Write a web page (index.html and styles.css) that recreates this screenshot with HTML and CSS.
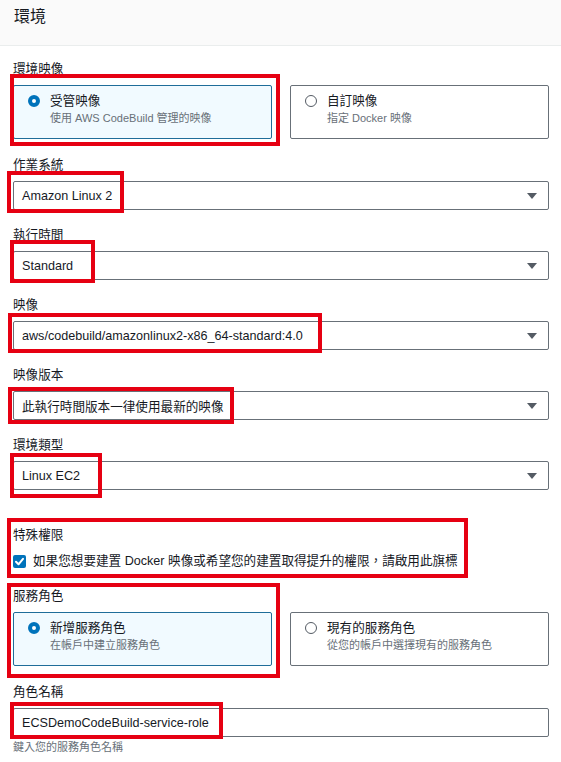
FILE: index.html
```html
<!DOCTYPE html>
<html lang="zh-Hant">
<head>
<meta charset="utf-8">
<title>環境</title>
<link rel="stylesheet" href="styles.css">
</head>
<body>
<div class="page">
  <header class="hdr"><h2>環境</h2></header>
  <main class="form">
    <section class="field field-tiles">
      <div class="label">環境映像</div>
      <div class="tiles">
        <div class="tile selected">
          <span class="radio on"></span>
          <div>
            <div class="tt">受管映像</div>
            <div class="td">使用 AWS CodeBuild 管理的映像</div>
          </div>
        </div>
        <div class="tile">
          <span class="radio"></span>
          <div>
            <div class="tt">自訂映像</div>
            <div class="td">指定 Docker 映像</div>
          </div>
        </div>
      </div>
    </section>

    <section class="field">
      <div class="label">作業系統</div>
      <div class="select"><span>Amazon Linux 2</span><svg class="caret" width="10" height="6" viewBox="0 0 10 6"><polygon points="0,0 10,0 5,6"/></svg></div>
    </section>

    <section class="field">
      <div class="label">執行時間</div>
      <div class="select"><span>Standard</span><svg class="caret" width="10" height="6" viewBox="0 0 10 6"><polygon points="0,0 10,0 5,6"/></svg></div>
    </section>

    <section class="field">
      <div class="label">映像</div>
      <div class="select"><span>aws/codebuild/amazonlinux2-x86_64-standard:4.0</span><svg class="caret" width="10" height="6" viewBox="0 0 10 6"><polygon points="0,0 10,0 5,6"/></svg></div>
    </section>

    <section class="field">
      <div class="label">映像版本</div>
      <div class="select"><span>此執行時間版本一律使用最新的映像</span><svg class="caret" width="10" height="6" viewBox="0 0 10 6"><polygon points="0,0 10,0 5,6"/></svg></div>
    </section>

    <section class="field">
      <div class="label">環境類型</div>
      <div class="select"><span>Linux EC2</span><svg class="caret" width="10" height="6" viewBox="0 0 10 6"><polygon points="0,0 10,0 5,6"/></svg></div>
    </section>

    <section class="field field-priv">
      <div class="label label-priv">特殊權限</div>
      <label class="check">
        <svg class="cb" width="13" height="13" viewBox="0 0 13 13"><rect x="0" y="0" width="13" height="13" rx="2" fill="#0073bb"/><polyline points="3,6.8 5.5,9.3 10,3.8" fill="none" stroke="#fff" stroke-width="2" stroke-linecap="round" stroke-linejoin="round"/></svg>
        <span>如果您想要建置 Docker 映像或希望您的建置取得提升的權限，請啟用此旗標</span>
      </label>
    </section>

    <section class="field field-tiles">
      <div class="label">服務角色</div>
      <div class="tiles">
        <div class="tile selected">
          <span class="radio on"></span>
          <div>
            <div class="tt">新增服務角色</div>
            <div class="td">在帳戶中建立服務角色</div>
          </div>
        </div>
        <div class="tile">
          <span class="radio"></span>
          <div>
            <div class="tt">現有的服務角色</div>
            <div class="td">從您的帳戶中選擇現有的服務角色</div>
          </div>
        </div>
      </div>
    </section>

    <section class="field">
      <div class="label">角色名稱</div>
      <div class="input">ECSDemoCodeBuild-service-role</div>
      <div class="hint">鍵入您的服務角色名稱</div>
    </section>
  </main>

  <div class="mark m1"></div>
  <div class="mark m2"></div>
  <div class="mark m3"></div>
  <div class="mark m4"></div>
  <div class="mark m5"></div>
  <div class="mark m6"></div>
  <div class="mark m7"></div>
  <div class="mark m8"></div>
  <div class="mark m9"></div>
</div>
</body>
</html>
```
FILE: styles.css
```css
* { box-sizing: border-box; }

body {
  margin: 0;
  font-family: "Liberation Sans", "Noto Sans CJK TC", sans-serif;
  font-size: 12.6px;
  color: #16191f;
  background: #ffffff;
}

.page {
  position: relative;
  width: 561px;
  height: 762px;
  overflow: hidden;
}

.hdr {
  height: 46px;
  background: #fafafa;
  border-bottom: 1px solid #eaeded;
  padding: 7px 0 0 14px;
}

.hdr h2 {
  margin: 0;
  font-size: 16px;
  font-weight: normal;
  line-height: 20px;
}

.form {
  display: flex;
  flex-direction: column;
  padding: 14px 12px 0 13px;
}

.field {
  margin-bottom: 16px;
}

.field-tiles {
  margin-bottom: 17px;
}

.label {
  line-height: 18px;
  margin-bottom: 7px;
}

.tiles {
  display: grid;
  grid-template-columns: 1fr 1fr;
  gap: 18px;
}

.tile {
  height: 54px;
  border: 1px solid #687078;
  border-radius: 2px;
  padding: 6px 14px 0 14px;
  display: flex;
  align-items: flex-start;
  gap: 10px;
}

.tile.selected {
  border-color: #1f6d99;
  background: #f1faff;
}

.radio {
  flex: none;
  width: 12px;
  height: 12px;
  margin-top: 3px;
  border-radius: 50%;
  border: 1.5px solid #545b64;
  background: #fff;
}

.radio.on {
  border: 4px solid #0073bb;
}

.tt {
  line-height: 18px;
}

.td {
  font-size: 11px;
  line-height: 16px;
  color: #687078;
}

.select,
.input {
  height: 29px;
  border: 1px solid #687078;
  border-radius: 2px;
  display: flex;
  align-items: center;
  padding: 0 11px 0 8px;
}

.select {
  justify-content: space-between;
}

.caret {
  fill: #545b64;
  flex: none;
}

.field-priv {
  margin-top: 20px;
  margin-bottom: 17px;
}

.label-priv {
  margin-bottom: 8px;
}

.check {
  display: flex;
  align-items: center;
  gap: 7px;
  line-height: 18px;
}

.cb {
  flex: none;
}

.hint {
  margin-top: 2px;
  font-size: 11px;
  line-height: 16px;
  color: #687078;
}

/* red annotation boxes drawn over the form */
.mark {
  position: absolute;
  border: 4px solid #e60012;
  pointer-events: none;
}

.m1 { left: 10px; top: 74px;  width: 270px; height: 72px; }
.m2 { left: 7px;  top: 171px; width: 117px; height: 42px; }
.m3 { left: 10px; top: 240px; width: 85px;  height: 43px; }
.m4 { left: 8px;  top: 313px; width: 314px; height: 40px; }
.m5 { left: 8px;  top: 387px; width: 226px; height: 37px; }
.m6 { left: 10px; top: 453px; width: 92px;  height: 45px; }
.m7 { left: 7px;  top: 518px; width: 461px; height: 60px; }
.m8 { left: 7px;  top: 583px; width: 273px; height: 95px; }
.m9 { left: 10px; top: 702px; width: 213px; height: 37px; }
```
